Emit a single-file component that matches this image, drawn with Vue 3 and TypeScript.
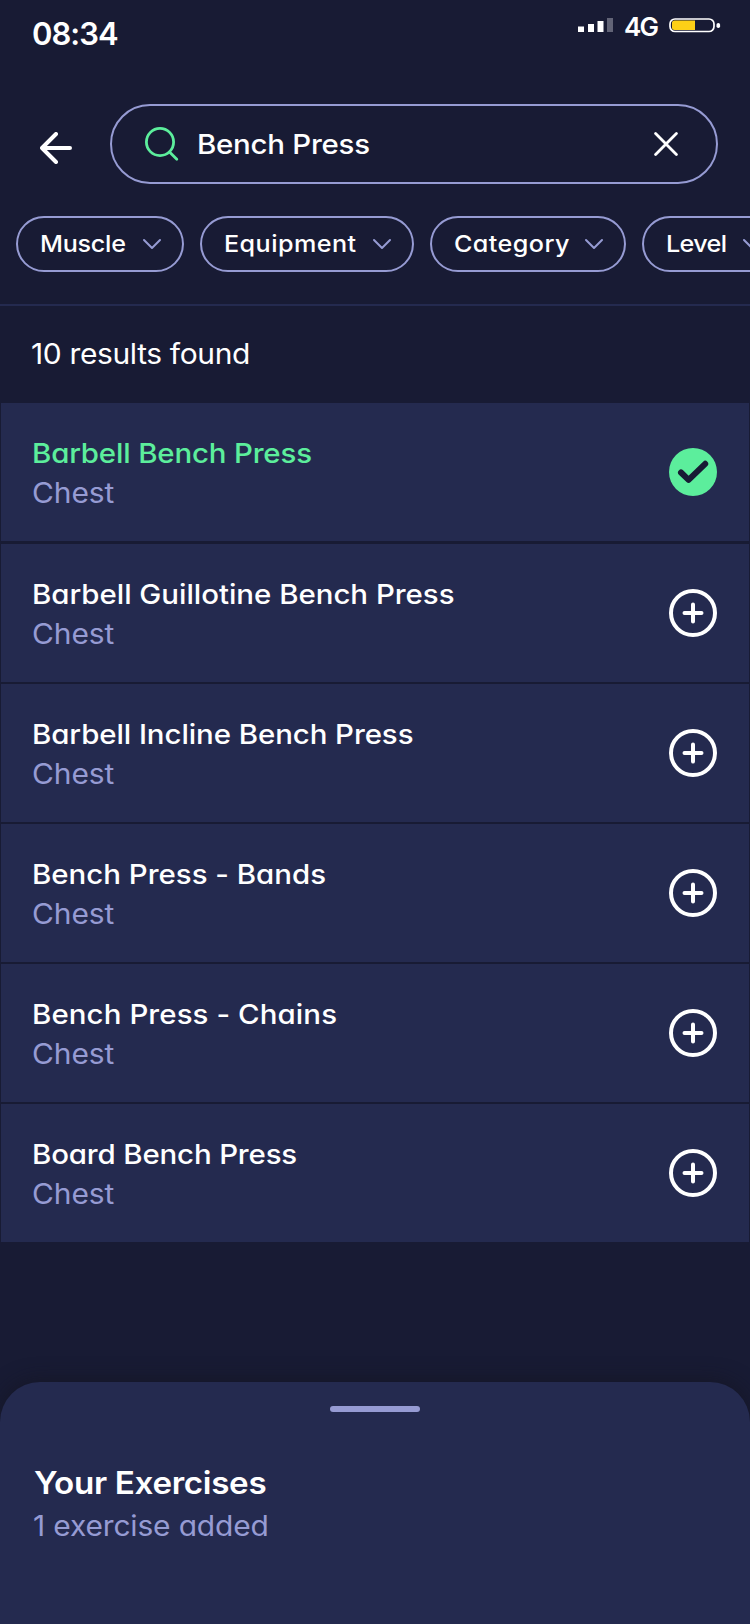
<script setup lang="ts">
interface Exercise {
  name: string
  muscle: string
  width: number
  added: boolean
}

const family = 'Inter, "Noto Sans", sans-serif'
const canvas = document.createElement('canvas').getContext('2d')!

// Letter spacing that gives a label the requested visible width,
// for letters stretched horizontally by the given factor.
function track(text: string, weight: number, size: number, width: number, stretch = 1.07) {
  canvas.font = `${weight} ${size}px ${family}`
  const m = canvas.measureText(text)
  const ink = m.actualBoundingBoxRight + m.actualBoundingBoxLeft
  return {
    letterSpacing: `${((width / stretch - ink) / (text.length - 1)).toFixed(3)}px`,
    transform: `scaleX(${stretch})`,
  }
}

const filters = [
  { label: 'Muscle', text: 84, chip: 168 },
  { label: 'Equipment', text: 131, chip: 214 },
  { label: 'Category', text: 112.5, chip: 196 },
  { label: 'Level', text: 59, chip: 142 },
]

const exercises: Exercise[] = [
  { name: 'Barbell Bench Press', muscle: 'Chest', width: 275.5, added: true },
  { name: 'Barbell Guillotine Bench Press', muscle: 'Chest', width: 418, added: false },
  { name: 'Barbell Incline Bench Press', muscle: 'Chest', width: 377, added: false },
  { name: 'Bench Press - Bands', muscle: 'Chest', width: 289.5, added: false },
  { name: 'Bench Press - Chains', muscle: 'Chest', width: 300.5, added: false },
  { name: 'Board Bench Press', muscle: 'Chest', width: 261, added: false },
]
</script>

<template>
  <main class="screen">
    <div class="status">
      <span class="time label" :style="track('08:34', 600, 31, 85, 1)">08:34</span>
      <div class="indicators">
        <svg class="signal" width="36" height="16" viewBox="0 0 36 16">
          <path fill="#fff" d="M0 8.500h6V14H0zM10 6h6v8h-6zM19.500 3h6v11h-6z" />
          <path fill="#626477" d="M29 0h6v14h-6z" />
        </svg>
        <span class="network label" :style="track('4G', 600, 26, 33.5, 1)">4G</span>
        <svg class="battery" width="52" height="16" viewBox="0 0 52 16">
          <rect x="1" y="1" width="44" height="12.500" rx="5" fill="none" stroke="#fff" stroke-width="1.700" />
          <path fill="#fdd017" d="M5.500 2.500H26v9.500H5.500a2.500 2.500 0 0 1-2.500-2.500V5a2.500 2.500 0 0 1 2.500-2.500z" />
          <rect x="47.500" y="5" width="3.600" height="5" rx="1.800" fill="#fff" />
        </svg>
      </div>
    </div>

    <header class="header">
      <div class="search-row">
        <button class="icon-button" aria-label="Back">
          <svg width="32" height="32" viewBox="0 0 32 32" fill="none" stroke="#fff" stroke-width="4" stroke-linecap="round" stroke-linejoin="round">
            <path d="M16 2 2 16l14 14M2 16h28" />
          </svg>
        </button>
        <div class="search">
          <svg width="36" height="36" viewBox="0 0 36 36" fill="none" stroke="#5cee9c" stroke-width="2.800" stroke-linecap="round">
            <circle cx="17" cy="16" r="13.600" />
            <path d="m26.500 26 7.300 7.300" />
          </svg>
          <span class="query label" :style="track('Bench Press', 500, 27.500, 170)">Bench Press</span>
          <svg width="24" height="24" viewBox="0 0 24 24" fill="none" stroke="#fff" stroke-width="2.800" stroke-linecap="round">
            <path d="m1.600 1.600 20.800 20.800M22.400 1.600 1.600 22.400" />
          </svg>
        </div>
      </div>
      <div class="filters">
        <button v-for="f in filters" :key="f.label" class="chip" :style="{ width: `${f.chip}px` }">
          <span class="label" :style="track(f.label, 500, 23.500, f.text)">{{ f.label }}</span>
          <svg width="20" height="12" viewBox="0 0 20 12" fill="none" stroke="#969bd3" stroke-width="2" stroke-linecap="round" stroke-linejoin="round">
            <path d="m2 2 8 8 8-8" />
          </svg>
        </button>
      </div>
    </header>

    <p class="count label" :style="track('10 results found', 400, 28, 216)">10 results found</p>

    <ul class="list">
      <li v-for="e in exercises" :key="e.name" class="item" :class="{ added: e.added }">
        <div class="text">
          <span class="name label" :style="track(e.name, 500, 27.500, e.width)">{{ e.name }}</span>
          <span class="muscle label" :style="track(e.muscle, 400, 28, 81)">{{ e.muscle }}</span>
        </div>
        <svg v-if="e.added" width="48" height="48" viewBox="0 0 48 48" fill="none">
          <circle cx="24" cy="24" r="24" fill="#5cee9c" />
          <path d="m12 24.500 7.600 7.400L36.200 15.800" stroke="#181b34" stroke-width="6" stroke-linecap="round" stroke-linejoin="round" />
        </svg>
        <svg v-else width="48" height="48" viewBox="0 0 48 48" fill="none" stroke="#fff" stroke-width="4" stroke-linecap="round">
          <circle cx="24" cy="24" r="22" />
          <path d="M24 15.500v17M15.500 24h17" />
        </svg>
      </li>
    </ul>

    <section class="sheet">
      <div class="handle"></div>
      <h2 class="sheet-title label" :style="track('Your Exercises', 600, 31, 231.500)">Your Exercises</h2>
      <p class="sheet-note label" :style="track('1 exercise added', 400, 28, 231)">1 exercise added</p>
    </section>
  </main>
</template>

<style>
html,
body {
  margin: 0;
  background: #181b34;
}
</style>

<style scoped>
.screen {
  display: flex;
  flex-direction: column;
  width: 750px;
  height: 1624px;
  overflow: hidden;
  background: #181b34;
  color: #fff;
  font-family: Inter, "Noto Sans", sans-serif;
  font-feature-settings: "cv11";
  white-space: nowrap;
}
.label {
  align-self: flex-start;
  transform-origin: left center;
}
.status {
  display: flex;
  justify-content: space-between;
  height: 104px;
  padding: 0 29px 0 32px;
  box-sizing: border-box;
}
.time {
  padding-top: 14px;
  font-size: 31px;
  font-weight: 600;
  line-height: 40px;
}
.indicators {
  display: flex;
  align-items: flex-start;
}
.signal {
  margin: 18px 10px 0 0;
}
.network {
  width: 35px;
  margin-right: 10px;
  padding-top: 11px;
  font-size: 26px;
  font-weight: 600;
  line-height: 32px;
}
.battery {
  margin-top: 18px;
}
.header {
  height: 202px;
  box-sizing: border-box;
  border-bottom: 2px solid #242a4f;
}
.search-row {
  display: flex;
  align-items: center;
  padding-right: 32px;
}
button {
  padding: 0;
  border: 0;
  background: none;
  color: inherit;
  font: inherit;
  font-feature-settings: inherit;
}
.icon-button {
  display: flex;
  width: 110px;
  padding: 8px 0 0 40px;
  box-sizing: border-box;
}
.search {
  display: flex;
  flex: 1;
  align-items: center;
  height: 80px;
  padding: 0 38px 0 31px;
  box-sizing: border-box;
  border: 2px solid #969bd3;
  border-radius: 40px;
}
.query {
  flex: 1;
  align-self: center;
  margin-left: 18px;
  font-size: 27.5px;
  font-weight: 500;
}
.filters {
  display: flex;
  gap: 16px;
  padding: 32px 0 0 16px;
}
.chip {
  display: flex;
  flex: none;
  align-items: center;
  justify-content: space-between;
  height: 56px;
  padding: 0 20px 0 22px;
  box-sizing: border-box;
  border: 2px solid #969bd3;
  border-radius: 28px;
  font-size: 23.5px;
  font-weight: 500;
}
.chip .label {
  align-self: center;
  padding-bottom: 2px;
}
.count {
  height: 97px;
  margin: 0;
  padding: 28px 0 0;
  margin-left: 31px;
  box-sizing: border-box;
  font-size: 28px;
  line-height: 40px;
}
.list {
  display: flex;
  flex-direction: column;
  gap: 2px;
  margin: 0 1px;
  padding: 0;
  list-style: none;
}
.item {
  display: flex;
  align-items: center;
  justify-content: space-between;
  height: 138px;
  padding: 0 32px 0 31px;
  background: #242a4f;
}
.item.added {
  margin-bottom: 1px;
}
.text {
  display: flex;
  flex-direction: column;
  padding-top: 2px;
}
.text span {
  line-height: 40px;
}
.name {
  font-size: 27.5px;
  font-weight: 500;
}
.added .name {
  color: #5cee9c;
}
.muscle {
  color: #969bd3;
  font-size: 28px;
}
.sheet {
  display: flex;
  flex: none;
  flex-direction: column;
  height: 242px;
  margin-top: auto;
  padding: 24px 33px 0;
  box-sizing: border-box;
  border-radius: 40px 40px 0 0;
  background: #242a4f;
  box-shadow: 0 -2px 20px rgba(20, 20, 30, 0.6);
}
.handle {
  width: 90px;
  height: 6px;
  margin: 0 auto;
  border-radius: 3px;
  background: #969bd3;
}
.sheet-title {
  margin: 49px 0 0 1px;
  font-size: 31px;
  font-weight: 600;
  line-height: 44px;
}
.sheet-note {
  margin: 0;
  color: #969bd3;
  font-size: 28px;
  line-height: 42px;
}
</style>
